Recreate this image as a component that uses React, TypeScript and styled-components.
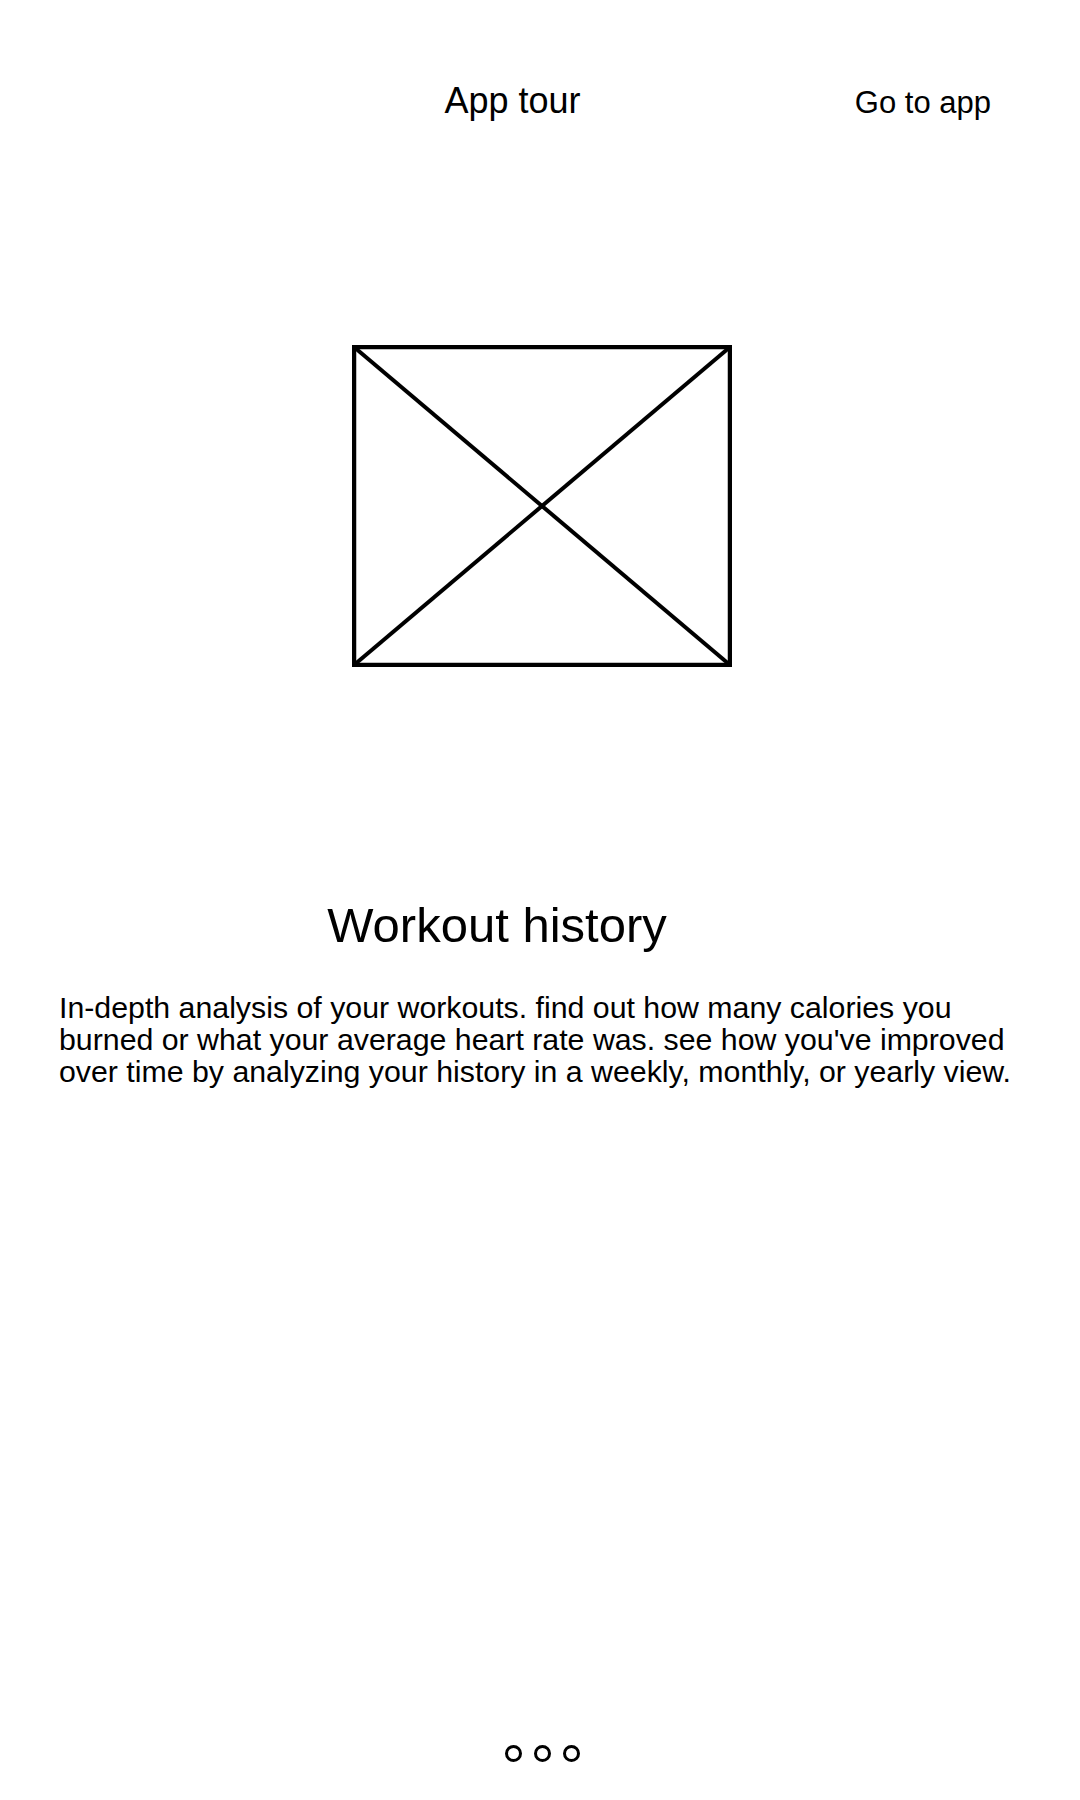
import React from "react";
import styled, { createGlobalStyle } from "styled-components";

const GlobalStyle = createGlobalStyle`
  html, body {
    margin: 0;
    padding: 0;
    background: #ffffff;
  }
  body {
    font-family: "Liberation Sans", Arial, sans-serif;
    color: #000000;
  }
`;

const Screen = styled.div`
  min-height: 1800px;
  display: flex;
  flex-direction: column;
  background: #ffffff;
`;

const Header = styled.header`
  display: grid;
  grid-template-columns: 1fr auto;
  align-items: baseline;
  padding: 81px 89px 0 0;
  height: 40px;
`;

const HeaderTitle = styled.h1`
  margin: 0;
  padding-left: 170px;
  text-align: center;
  font-size: 36px;
  font-weight: 400;
  line-height: 40px;
`;

const SkipButton = styled.button`
  border: none;
  background: none;
  padding: 0;
  margin: 0;
  font-family: inherit;
  font-size: 31px;
  line-height: 40px;
  color: #000000;
  cursor: pointer;
`;

const Illustration = styled.div`
  display: flex;
  justify-content: center;
  padding-left: 3px;
  margin-top: 224px;
`;

const Slide = styled.section`
  display: flex;
  flex-direction: column;
`;

const SlideTitle = styled.h2`
  margin: 230px 0 0;
  padding-right: 86px;
  text-align: center;
  font-size: 49px;
  font-weight: 400;
  line-height: 56px;
`;

const SlideText = styled.p`
  margin: 39px 0 0;
  padding: 0 48px 0 59px;
  font-size: 30.3px;
  line-height: 32px;
`;

const Pager = styled.nav`
  margin-top: auto;
  display: flex;
  justify-content: center;
  gap: 12px;
  padding: 0 0 38px 4px;
`;

const Dot = styled.span<{ $active?: boolean }>`
  box-sizing: border-box;
  width: 17px;
  height: 17px;
  border-radius: 50%;
  border: 3px solid #000000;
  background: ${(p) => (p.$active ? "#000000" : "transparent")};
`;

function PlaceholderImage() {
  return (
    <svg width="380" height="322" viewBox="0 0 380 322" aria-hidden="true">
      <rect x="2" y="2" width="376" height="318" fill="none" stroke="#000" strokeWidth="4.5" />
      <line x1="2" y1="2" x2="378" y2="320" stroke="#000" strokeWidth="4" />
      <line x1="378" y1="2" x2="2" y2="320" stroke="#000" strokeWidth="4" />
    </svg>
  );
}

export default function App() {
  return (
    <>
      <GlobalStyle />
      <Screen>
        <Header>
          <HeaderTitle>App tour</HeaderTitle>
          <SkipButton>Go to app</SkipButton>
        </Header>
        <Slide>
          <Illustration>
            <PlaceholderImage />
          </Illustration>
          <SlideTitle>Workout history</SlideTitle>
          <SlideText>
            In-depth analysis of your workouts. find out how many calories you burned or what
            your average heart rate was. see how you've improved over time by analyzing your
            history in a weekly, monthly, or yearly view.
          </SlideText>
        </Slide>
        <Pager>
          <Dot />
          <Dot />
          <Dot />
        </Pager>
      </Screen>
    </>
  );
}
